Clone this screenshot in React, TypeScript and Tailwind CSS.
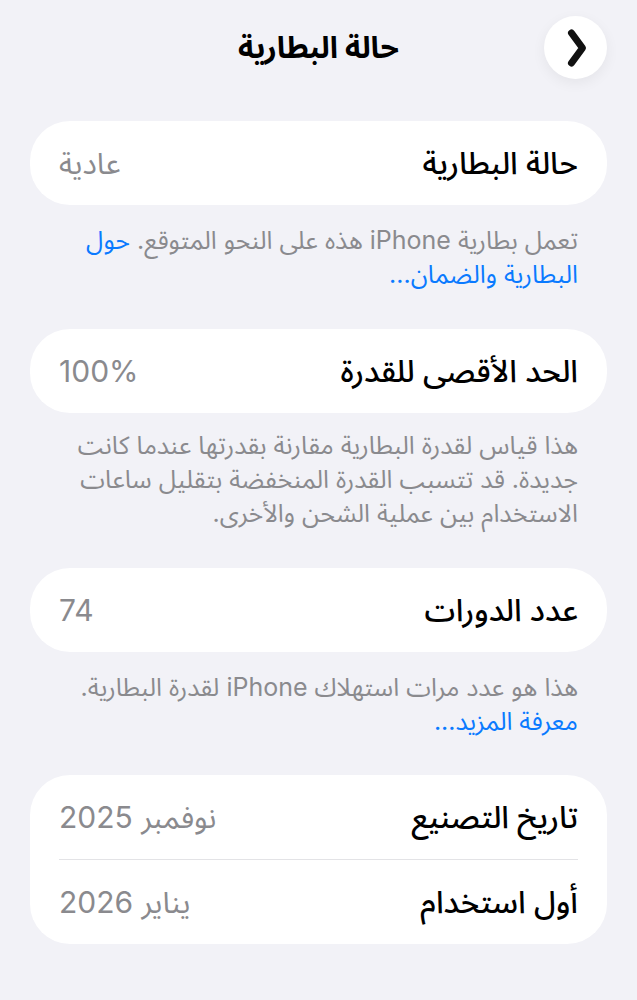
import React from "react";

const font = { fontFamily: '"Inter", "Noto Sans Arabic", "DejaVu Sans", sans-serif' };

function Row({ label, value }: { label: string; value: string }) {
  return (
    <div className="flex items-center justify-between h-[84px] px-[29px]">
      <span className="text-[31px] leading-[40px] text-black font-medium">{label}</span>
      <span className="text-[30px] leading-[40px] text-[#8a8a8e]">{value}</span>
    </div>
  );
}

export default function App() {
  return (
    <div dir="rtl" className="min-h-[1000px] w-full bg-[#f2f2f7] px-[30px]" style={font}>
      <div className="relative flex items-center justify-center h-[96px]">
        <h1 className="text-[30px] font-bold text-black mt-[-2px]">حالة البطارية</h1>
        <div className="absolute right-0 top-[16px] w-[63px] h-[63px] rounded-full bg-white shadow-[0_4px_14px_rgba(0,0,0,0.06)] flex items-center justify-center">
          <svg width="30" height="44" viewBox="0 0 30 44" fill="none" className="ml-[2px]">
            <path d="M9.5 7 L20.5 22 L9.5 37" stroke="#111" strokeWidth="7" strokeLinecap="round" strokeLinejoin="round" />
          </svg>
        </div>
      </div>

      <div className="mt-[25px] bg-white rounded-[40px]">
        <Row label="حالة البطارية" value="عادية" />
      </div>
      <p className="px-[29px] pt-[18px] text-[25px] leading-[34px] text-[#8a8a8e]">
        تعمل بطارية iPhone هذه على النحو المتوقع. <span className="text-[#0a7aff]">حول</span>
        <br />
        <span className="text-[#0a7aff]">البطارية والضمان...</span>
      </p>

      <div className="mt-[38px] bg-white rounded-[40px]">
        <Row label="الحد الأقصى للقدرة" value="100%" />
      </div>
      <p className="px-[29px] pt-[15px] text-[25px] leading-[34px] text-[#8a8a8e]">
        هذا قياس لقدرة البطارية مقارنة بقدرتها عندما كانت
        <br />
        جديدة. قد تتسبب القدرة المنخفضة بتقليل ساعات
        <br />
        الاستخدام بين عملية الشحن والأخرى.
      </p>

      <div className="mt-[38px] bg-white rounded-[40px]">
        <Row label="عدد الدورات" value="74" />
      </div>
      <p className="px-[29px] pt-[18px] text-[25px] leading-[34px] text-[#8a8a8e]">
        هذا هو عدد مرات استهلاك iPhone لقدرة البطارية.
        <br />
        <span className="text-[#0a7aff]">معرفة المزيد...</span>
      </p>

      <div className="mt-[37px] bg-white rounded-[40px]">
        <Row label="تاريخ التصنيع" value="نوفمبر 2025" />
        <div className="mx-[29px] h-px bg-[#e3e3e6]" />
        <Row label="أول استخدام" value="يناير 2026" />
      </div>
    </div>
  );
}
